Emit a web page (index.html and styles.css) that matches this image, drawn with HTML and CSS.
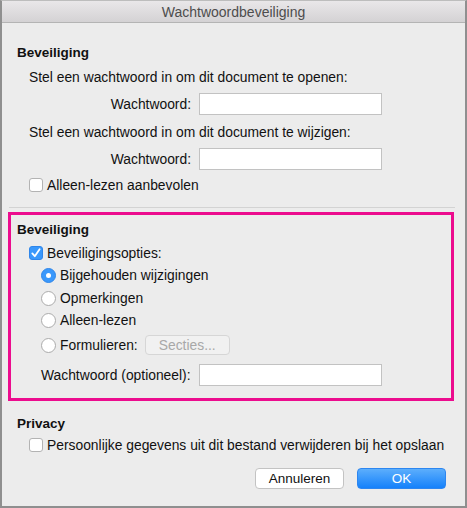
FILE: index.html
```html
<!DOCTYPE html>
<html>
<head>
<meta charset="utf-8">
<link rel="stylesheet" href="styles.css">
</head>
<body>
<div class="window">
  <div class="titlebar">Wachtwoordbeveiliging</div>
  <div class="content">
    <div class="row heading h1">Beveiliging</div>
    <div class="row indent stel1">Stel een wachtwoord in om dit document te openen:</div>
    <div class="row field f1"><span class="label">Wachtwoord:</span><span class="input"></span></div>
    <div class="row indent stel2">Stel een wachtwoord in om dit document te wijzigen:</div>
    <div class="row field f2"><span class="label">Wachtwoord:</span><span class="input"></span></div>
    <div class="row indent chk1"><span class="checkbox"></span><span>Alleen-lezen aanbevolen</span></div>
    <div class="separator"></div>
    <div class="highlight">
      <div class="row heading h2">Beveiliging</div>
      <div class="row indent chk2"><span class="checkbox checked"><svg width="14" height="14" viewBox="0 0 14 14"><path d="M3.3 7.4 L5.8 10.2 L10.6 3.2" fill="none" stroke="#fff" stroke-width="1.8" stroke-linecap="round" stroke-linejoin="round"/></svg></span><span>Beveiligingsopties:</span></div>
      <div class="row indent2 r1"><span class="radio selected"></span><span>Bijgehouden wijzigingen</span></div>
      <div class="row indent2 r2"><span class="radio"></span><span>Opmerkingen</span></div>
      <div class="row indent2 r3"><span class="radio"></span><span>Alleen-lezen</span></div>
      <div class="row indent2 r4"><span class="radio"></span><span>Formulieren:</span><span class="btn-disabled">Secties...</span></div>
      <div class="row indent2 opt"><span class="optlabel">Wachtwoord (optioneel):</span><span class="input"></span></div>
    </div>
    <div class="row heading h3">Privacy</div>
    <div class="row indent chk3"><span class="checkbox"></span><span>Persoonlijke gegevens uit dit bestand verwijderen bij het opslaan</span></div>
    <div class="buttons">
      <span class="btn cancel">Annuleren</span>
      <span class="btn ok">OK</span>
    </div>
  </div>
</div>
</body>
</html>
```

FILE: styles.css
```css
html, body {
  margin: 0;
  padding: 0;
  background: #ececec;
}
body {
  font-family: "Liberation Sans", Arial, sans-serif;
  font-size: 13.85px;
  color: #111;
}
.window {
  box-sizing: border-box;
  width: 467px;
  height: 508px;
  border: 2px solid #8f8f8f;
  border-top: 1px solid #bdbdbd;
  background: #ececec;
  overflow: hidden;
}
.titlebar {
  height: 21px;
  border-bottom: 1px solid #b4b4b4;
  background: linear-gradient(#e9e7e9, #d4d2d4);
  color: #4d4d4d;
  text-align: center;
  line-height: 22px;
  font-size: 14px;
}
.row {
  display: flex;
  align-items: center;
  height: 20px;
  white-space: nowrap;
}
.heading {
  font-weight: bold;
  font-size: 13.5px;
  padding-left: 15px;
}
.indent {
  padding-left: 27px;
}
.h1 { margin-top: 19px; }
.stel1 { margin-top: 5px; }
.field { height: 22px; }
.f1 { margin-top: 6px; }
.stel2 { margin-top: 7px; }
.f2 { margin-top: 6px; }
.chk1 { margin-top: 5px; }
.label {
  width: 189px;
  text-align: right;
  margin-right: 8px;
}
.input {
  box-sizing: border-box;
  width: 183px;
  height: 22px;
  background: #fff;
  border: 1px solid #c2c2c2;
}
.checkbox {
  box-sizing: border-box;
  width: 14px;
  height: 14px;
  border: 1px solid #b3b3b3;
  border-radius: 3px;
  background: #fff;
  margin-right: 4px;
  display: inline-flex;
  flex-shrink: 0;
}
.checkbox.checked {
  background: #3a98fb;
  border-color: #2f86ea;
}
.checkbox.checked svg {
  margin: -1px;
}
.separator {
  height: 1px;
  background: #d3d3d3;
  margin: 12px 10px 0 7px;
}
.highlight {
  box-sizing: border-box;
  margin: 4px 0 0 6px;
  width: 446px;
  height: 189px;
  border: 3px solid #ec0c8e;
  padding-top: 4px;
}
.highlight .heading { padding-left: 6px; }
.highlight .indent { padding-left: 18px; }
.indent2 { padding-left: 30px; }
.chk2 { margin-top: 4px; }
.r1 { margin-top: 2px; }
.r2 { margin-top: 3px; }
.r3 { margin-top: 2px; }
.r4 { margin-top: 5px; }
.opt { margin-top: 9px; height: 22px; }
.radio {
  box-sizing: border-box;
  width: 15px;
  height: 15px;
  border-radius: 50%;
  border: 1px solid #ababab;
  background: #fff;
  margin-right: 4px;
  position: relative;
  flex-shrink: 0;
}
.radio.selected {
  background: #3a98fb;
  border-color: #2f86ea;
}
.radio.selected::after {
  content: "";
  position: absolute;
  left: 4px;
  top: 4px;
  width: 5px;
  height: 5px;
  border-radius: 50%;
  background: #fff;
}
.btn-disabled {
  box-sizing: border-box;
  margin-left: 7px;
  width: 85px;
  height: 20px;
  border: 1px solid #d6d6d6;
  border-radius: 4px;
  background: #f1f1f1;
  color: #a8a8a8;
  text-align: center;
  line-height: 18px;
}
.optlabel {
  width: 158px;
}
.h3 { margin-top: 12px; }
.chk3 { margin-top: 2px; }
.buttons {
  display: flex;
  justify-content: flex-end;
  gap: 13px;
  margin-top: 13px;
  padding-right: 19px;
}
.btn {
  box-sizing: border-box;
  width: 89px;
  height: 21px;
  border-radius: 4px;
  text-align: center;
  line-height: 19px;
  font-size: 13.5px;
}
.cancel {
  background: #fff;
  border: 1px solid #c3c3c3;
  color: #111;
}
.ok {
  background: linear-gradient(#5caefc, #1581fb);
  border: 1px solid #2d86f0;
  color: #fff;
}
```
